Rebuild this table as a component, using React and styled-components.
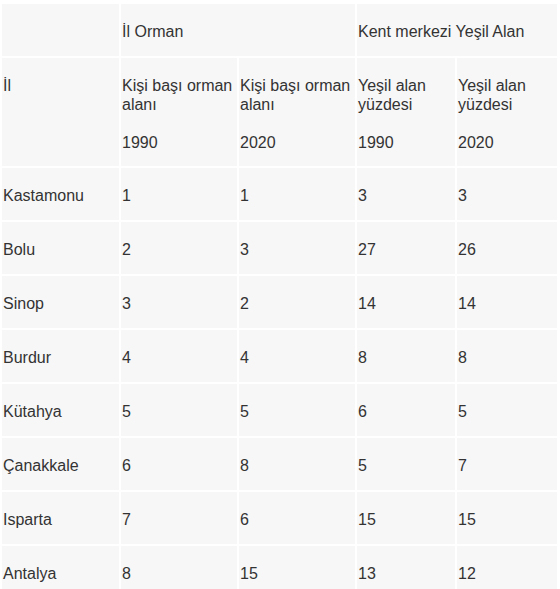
import styled, { createGlobalStyle } from 'styled-components';

const GlobalStyle = createGlobalStyle`
  body {
    margin: 0;
    background: #ffffff;
    font-family: "Liberation Sans", Arial, Helvetica, sans-serif;
  }
`;

const Table = styled.table`
  margin-top: 2px;
  border-collapse: separate;
  border-spacing: 2px;
  table-layout: fixed;
  font-size: 16px;
  line-height: 19px;
  color: #333333;
`;

const Col = styled.col`
  width: ${(p) => p.w}px;
`;

// the reference font sits a bit lower in its line box, so the top pad is larger
const Cell = styled.td`
  background: #f7f7f7;
  padding: 18px 1px ${(p) => (p.tall ? 14 : 15)}px;
  vertical-align: top;
  text-align: left;
  font-weight: normal;
`;

const HeadCell = styled(Cell).attrs({ as: 'th' })``;

const rows = [
  ['Kastamonu', 1, 1, 3, 3],
  ['Bolu', 2, 3, 27, 26],
  ['Sinop', 3, 2, 14, 14],
  ['Burdur', 4, 4, 8, 8],
  ['Kütahya', 5, 5, 6, 5],
  ['Çanakkale', 6, 8, 5, 7],
  ['Isparta', 7, 6, 15, 15],
  ['Antalya', 8, 15, 13, 12],
];

function SubHead({ title, year }) {
  return (
    <HeadCell tall>
      {title}
      <br />
      <br />
      {year}
    </HeadCell>
  );
}

function App() {
  return (
    <>
      <GlobalStyle />
      <Table>
        <colgroup>
          <Col w={117} />
          <Col w={116} />
          <Col w={116} />
          <Col w={98} />
          <Col w={100} />
        </colgroup>
        <thead>
          <tr>
            <HeadCell></HeadCell>
            <HeadCell colSpan={2}>İl Orman</HeadCell>
            <HeadCell colSpan={2}>Kent merkezi Yeşil Alan</HeadCell>
          </tr>
          <tr>
            <HeadCell tall>İl</HeadCell>
            <SubHead title="Kişi başı orman alanı" year="1990" />
            <SubHead title="Kişi başı orman alanı" year="2020" />
            <SubHead title="Yeşil alan yüzdesi" year="1990" />
            <SubHead title="Yeşil alan yüzdesi" year="2020" />
          </tr>
        </thead>
        <tbody>
          {rows.map((r) => (
            <tr key={r[0]}>
              {r.map((v, i) => (
                <Cell key={i}>{v}</Cell>
              ))}
            </tr>
          ))}
        </tbody>
      </Table>
    </>
  );
}

export default App;
